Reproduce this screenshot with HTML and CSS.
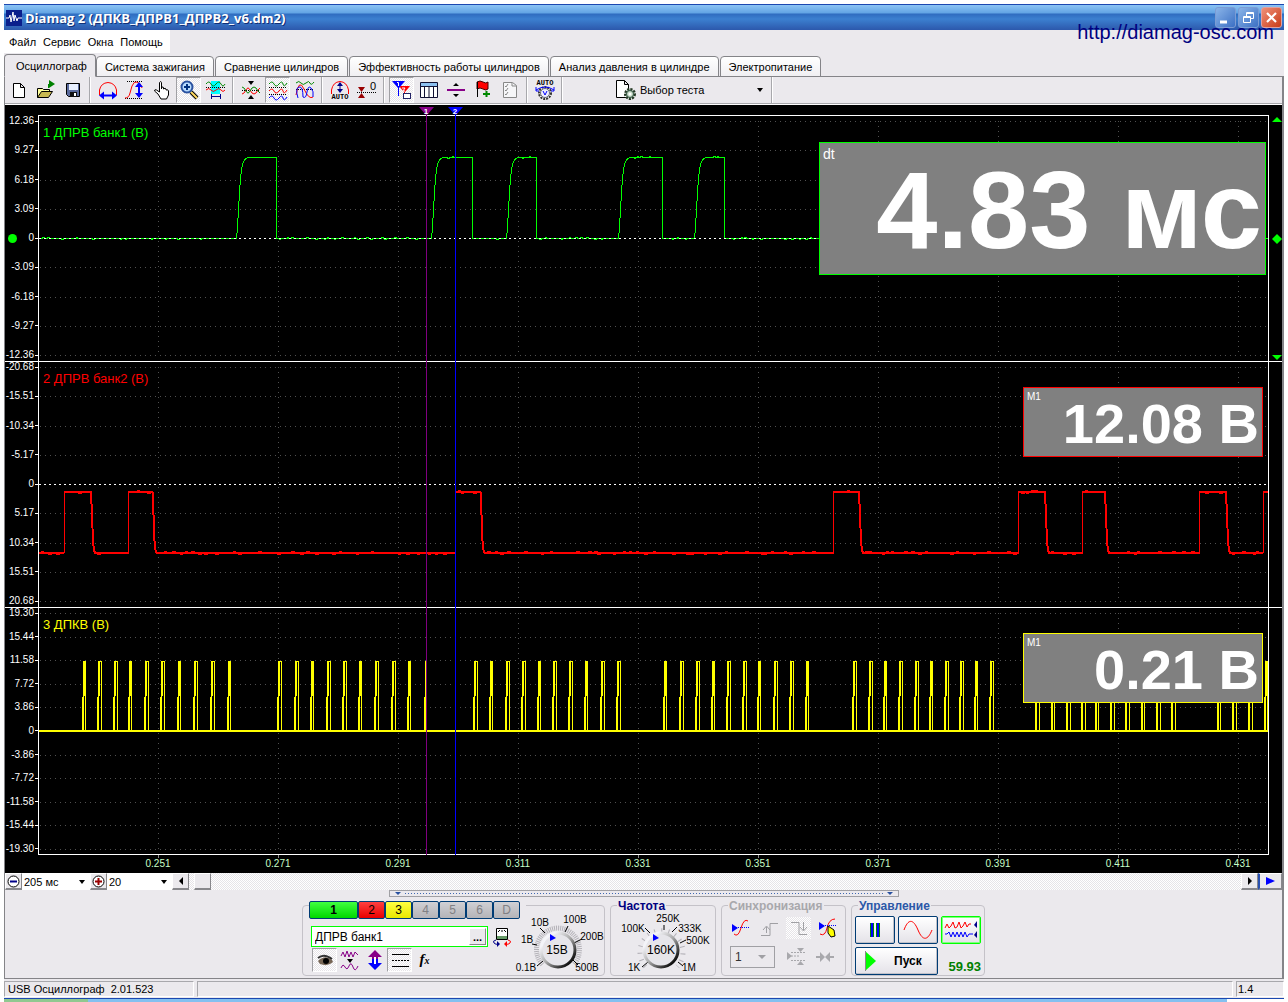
FILE: index.html
```html
<!DOCTYPE html>
<html lang="ru">
<head>
<meta charset="utf-8">
<title>Diamag 2</title>
<link rel="stylesheet" href="styles.css">
</head>
<body>
<div class="window">
  <header class="titlebar">
    <svg class="app-icon" width="16" height="16" viewBox="0 0 16 16"><rect width="16" height="16" fill="#0a1f8c"/><path d="M0 8h3l1-3 1 7 2-10 1 9 1-6 2 6 1-3h4" fill="none" stroke="#fff"/></svg>
    <h1>Diamag 2 (ДПКВ_ДПРВ1_ДПРВ2_v6.dm2)</h1>
    <button class="win-btn" aria-label="Свернуть"><svg width="19" height="19"><path d="M4 14h7" stroke="#fff" stroke-width="3"/></svg></button>
    <button class="win-btn" aria-label="Восстановить"><svg width="19" height="19" fill="none" stroke="#fff"><path d="M4.500 8.500h7v6h-7zM4 9.500h8M7.500 8V4.500h7v6h-3M7 5.500h8"/></svg></button>
    <button class="win-btn close" aria-label="Закрыть"><svg width="19" height="19"><path d="M5 5l9 9M14 5l-9 9" stroke="#fff" stroke-width="2.200"/></svg></button>
    <a class="site" href="http://diamag-osc.com">http://diamag-osc.com</a>
  </header>

  <nav class="menu">
    <button>Файл</button><button>Сервис</button><button>Окна</button><button>Помощь</button>
  </nav>

  <div class="tabs" role="tablist">
    <button class="tab active" role="tab">Осциллограф</button>
    <button class="tab" role="tab">Система зажигания</button>
    <button class="tab" role="tab">Сравнение цилиндров</button>
    <button class="tab" role="tab">Эффективность работы цилиндров</button>
    <button class="tab" role="tab">Анализ давления в цилиндре</button>
    <button class="tab" role="tab">Электропитание</button>
  </div>

  <main class="page">
    <div class="toolbar">
      <button class="tool" aria-label="Новый"><svg viewBox="0 0 20 20"><path d="M4.500 3.500h7l4 4v10h-11zM11.500 3.500v4h4" fill="#fff" stroke="#000"/></svg></button>
      <button class="tool" aria-label="Открыть"><svg viewBox="0 0 20 20"><path d="M1.500 17.500v-9h5l1 1h6v3" fill="#ffff9c" stroke="#000"/><path d="M1.500 17.500l4-6h11l-4 6z" fill="#c8b850" stroke="#000"/><path d="M12.500 8V4" stroke="#080"/><path d="M13 0l6 4-6 4z" fill="#008000"/></svg></button>
      <button class="tool" aria-label="Сохранить"><svg viewBox="0 0 20 20"><path d="M3.500 3.500h13v13h-11l-2-2z" fill="#5a6a9c" stroke="#000"/><path d="M6 4h9v6H6z" fill="#e8f0ff"/><path d="M7 12h7v5H7z" fill="#111"/><path d="M11 13h2v3h-2z" fill="#fff"/></svg></button>
      <span class="sep"></span>
      <button class="tool" aria-label="Период"><svg viewBox="0 0 20 20" fill="none"><path d="M1.500 15V10Q3 3 10 2.500 17 3 18.500 10v5" stroke="red"/><path d="M3 15.500h14" stroke="#00f" stroke-width="2"/><path d="M1 15.500l5-4v8zM19 15.500l-5-4v8z" fill="#00f"/></svg></button>
      <button class="tool" aria-label="Амплитуда"><svg viewBox="0 0 20 20" fill="none"><path d="M2 1.500h16M0 18.500h17" stroke="#000" stroke-dasharray="1 1"/><path d="M0 18q4 0 5-5l2-7q2-5 5-4 4 1 5 6" stroke="red"/><path d="M14 5v10" stroke="#00f" stroke-width="2"/><path d="M14 2l-4 5h8zM14 18l-4-5h8z" fill="#00f"/></svg></button>
      <button class="tool" aria-label="Рука"><svg viewBox="0 0 20 20"><path d="M7.500 12V2.500q1.500-2 2 0V9V7.500q2-1.500 2 .5v1q2-1.500 2.500 0v1q2-1 2.500 1v4l-2 4H9l-3-5-3.500-3q0-2 2-1z" fill="#fff" stroke="#000"/></svg></button>
      <button class="tool on" aria-label="Лупа"><svg viewBox="0 0 20 20"><path d="M12 12l6 6" stroke="#000" stroke-width="4"/><path d="M12 12l6 6" stroke="#ffd860" stroke-width="2"/><circle cx="8" cy="7" r="5.500" fill="#b8dcff" stroke="#2a52a0" stroke-width="2"/><path d="M5 7h6M8 4v6" stroke="#003080" stroke-width="2"/></svg></button>
      <button class="tool" aria-label="Участок"><svg viewBox="0 0 20 20" fill="none"><path d="M5 1h9v13H5z" fill="#0ff"/><path d="M0 4q3-4 5 0t5 0 5 0 4 0" stroke="#080"/><path d="M0 7.500h19" stroke="#000" stroke-dasharray="1 1"/><path d="M0 10q3-3 5 0t5 0 5 0 4 0" stroke="red"/><path d="M5.500 14v5M14.500 14v5M6 16.500h8" stroke="#008"/></svg></button>
      <span class="sep"></span>
      <button class="tool" aria-label="Центр"><svg viewBox="0 0 20 20" fill="none"><path d="M7 1h6l-3 4zM7 19h6l-3-4z" fill="#000"/><path d="M1 10.500h18" stroke="#000" stroke-dasharray="1 1"/><path d="M1 14q2 0 4-4t4 0 4 4 4-4l2-2" stroke="red"/><path d="M1 7q2 0 4 4t4 0 4-4 4 4l2 2" stroke="#080"/></svg></button>
      <button class="tool on" aria-label="Раздельно"><svg viewBox="0 0 20 20" fill="none"><path d="M1 4q3-4 5 0t5 0 4 0 4-1" stroke="#080"/><path d="M1 7.500h18M1 14.500h18" stroke="#000" stroke-dasharray="1 1"/><path d="M1 11q3-4 5 0t5 0 4 0 4-1" stroke="red"/><path d="M1 18q3-4 5 0t5 0 4 0 4-1" stroke="#00f"/></svg></button>
      <button class="tool" aria-label="Совместно"><svg viewBox="0 0 20 20" fill="none"><path d="M1 3q3-3 5 0t5 0 4 0 4-1" stroke="#080"/><path d="M1 9.500h18" stroke="#000" stroke-dasharray="1 1"/><path d="M1 15Q4-2 9 9t9 8" stroke="red"/><path d="M3 18Q0 8 4 7t4 10q3 2 4-5t4-4 2 9" stroke="#00f"/></svg></button>
      <span class="sep"></span>
      <button class="tool" aria-label="Авто"><svg viewBox="0 0 20 20" fill="none"><path d="M1.500 14V10Q3 2 10 1.500 17 2 18.500 10v4" stroke="red"/><path d="M10 3v8" stroke="#008"/><path d="M10 2l-3 4h6zM10 13l-3-4h6z" fill="#008"/><text x="10" y="19" class="micro">AUTO</text></svg></button>
      <button class="tool" aria-label="Ноль"><svg viewBox="0 0 20 20"><path d="M1 7h7l-3.500 5zM1 18h7l-3.500-5z" fill="#900"/><path d="M0 12.500h19" stroke="#000" stroke-dasharray="1 1"/><text x="16" y="10" class="zero">0</text></svg></button>
      <span class="sep"></span>
      <button class="tool on" aria-label="Маркеры"><svg viewBox="0 0 20 20"><path d="M7 6h11l-5 6v7h-1v-7z" fill="red"/><path d="M0 1h13L7 8v8H6V8z" fill="#00f"/><path d="M5 2.500h1.500V6M10 8h3l-2 3h2" stroke="#fff" fill="none"/><rect x="11.500" y="13.500" width="7" height="5" fill="#fff" stroke="#226"/></svg></button>
      <button class="tool" aria-label="Таблица"><svg viewBox="0 0 20 20"><path d="M1.500 2.500h17v15h-17z" fill="#fff" stroke="#113"/><path d="M2 3h16v3H2z" fill="#8cc0f0"/><path d="M1 6.500h18M5.500 6v11M10 6v11M14.500 6v11" stroke="#113"/></svg></button>
      <button class="tool" aria-label="Разделить"><svg viewBox="0 0 20 20"><path d="M10 3l3 3H7zM10 17l3-3H7z"/><path d="M1 10h18" stroke="#808" stroke-width="2"/></svg></button>
      <button class="tool" aria-label="Флаг"><svg viewBox="0 0 20 20"><path d="M4 2q3-2 6 0t5 0v7q-2 2-5 0t-6 0z" fill="red" stroke="#400"/><path d="M4.500 2v15" stroke="#000"/><path d="M13.500 11v6M10 14h7" stroke="#080" stroke-width="2"/></svg></button>
      <button class="tool" aria-label="Список"><svg viewBox="0 0 20 20" fill="none" stroke="#888"><path d="M3.500 2.500h9l4 3v12h-13z" fill="#f6f6f8"/><path d="M5 6l1 1 2-3M5 10l1 1 2-3M5 14l1 1 2-3M12 3v3h4"/></svg></button>
      <span class="sep"></span>
      <button class="tool" aria-label="Автонастройка"><svg viewBox="0 0 20 24"><text x="10" y="7" class="micro">AUTO</text><circle cx="10" cy="15" r="6" fill="#fff" stroke="#333" stroke-dasharray="2 1" stroke-width="2"/><circle cx="10" cy="15" r="4.500" fill="#eef" stroke="#667"/><path d="M8 13l2 4 2-4" stroke="#00f" fill="none"/><path d="M1 12q9-6 18 0M1 9v4h3M19 9v4h-3" stroke="#00f" fill="none"/></svg></button>
      <span class="sep"></span>
      <button class="test-pick">
        <svg width="22" height="20" viewBox="0 0 22 20"><path d="M1.500.5h8l4 4v13h-12zM9.500.5v4h4" fill="#fff" stroke="#000"/><circle cx="15" cy="14" r="4.500" fill="#b8ccb8" stroke="#243824" stroke-width="3" stroke-dasharray="2 1"/><circle cx="15" cy="14" r="3.500" fill="#c8dcc8" stroke="#354"/><circle cx="15" cy="14" r="1.500" fill="#fff"/></svg>
        <span>Выбор теста</span><i class="caret"></i>
      </button>
      <span class="sep"></span>
    </div>

    <section class="scope">
      <div class="channel ch1">
        <ol class="axis"><li>12.36</li><li>9.27</li><li>6.18</li><li>3.09</li><li>0</li><li>-3.09</li><li>-6.18</li><li>-9.27</li><li>-12.36</li></ol>
        <div class="plot"><svg id="plot1" viewBox="39 115 1229 246" preserveAspectRatio="none"></svg><h2>1 ДПРВ банк1 (В)</h2></div>
        <div class="marks"><svg width="10" height="7"><path d="M5 1l5 5H0z"/></svg><svg width="10" height="10"><path d="M5 0l5 5-5 5-5-5z"/></svg><svg width="10" height="7"><path d="M5 6L0 1h10z"/></svg></div>
      </div>
      <div class="channel ch2">
        <ol class="axis"><li>-20.68</li><li>-15.51</li><li>-10.34</li><li>-5.17</li><li>0</li><li>5.17</li><li>10.34</li><li>15.51</li><li>20.68</li></ol>
        <div class="plot"><svg id="plot2" viewBox="39 361 1229 246" preserveAspectRatio="none"></svg><h2>2 ДПРВ банк2 (В)</h2></div>
      </div>
      <div class="channel ch3">
        <ol class="axis"><li>19.30</li><li>15.44</li><li>11.58</li><li>7.72</li><li>3.86</li><li>0</li><li>-3.86</li><li>-7.72</li><li>-11.58</li><li>-15.44</li><li>-19.30</li></ol>
        <div class="plot"><svg id="plot3" viewBox="39 607 1229 248" preserveAspectRatio="none"></svg><h2>3 ДПКВ (В)</h2></div>
      </div>
      <ol class="time"><li>0.251</li><li>0.271</li><li>0.291</li><li>0.311</li><li>0.331</li><li>0.351</li><li>0.371</li><li>0.391</li><li>0.411</li><li>0.431</li></ol>
      <svg class="flags" viewBox="39 106 1229 10" preserveAspectRatio="none"><path d="M419 107h15l-7 8h-1z" fill="#808"/><path d="M448 107h15l-7 8h-1z" fill="#00f"/><text x="426" y="114">1</text><text x="455" y="114">2</text></svg>
      <div class="readout big r1"><span>dt</span><strong>4.83 мс</strong></div>
      <div class="readout r2"><span>M1</span><strong>12.08 В</strong></div>
      <div class="readout r3"><span>M1</span><strong>0.21 В</strong></div>
    </section>

    <div class="scrollrow">
      <button class="sbtn" aria-label="Уменьшить"><svg width="13" height="13" fill="none"><circle cx="6.500" cy="6.500" r="5.500" stroke="#000" fill="#fff"/><path d="M3 6.500h7" stroke="#008" stroke-width="2"/></svg></button>
      <span class="combo w1"><select aria-label="Длительность"><option>205 мс</option></select><i class="caret"></i></span>
      <button class="sbtn" aria-label="Увеличить"><svg width="13" height="13" fill="none"><circle cx="6.500" cy="6.500" r="5.500" stroke="#000" fill="#fff"/><path d="M3 6.500h7M6.500 3v7" stroke="#900" stroke-width="2"/></svg></button>
      <span class="combo w2"><select aria-label="Масштаб"><option>20</option></select><i class="caret"></i></span>
      <button class="sbtn" aria-label="Влево"><svg width="6" height="8"><path d="M5 0v8L1 4z"/></svg></button>
      <input class="track" type="range" min="0" max="1035" value="5" aria-label="Прокрутка">
      <button class="sbtn" aria-label="Вправо"><svg width="6" height="8"><path d="M1 0v8l4-4z"/></svg></button>
      <button class="sbtn play" aria-label="Воспроизвести"><svg width="9" height="8"><path d="M0 0v8l9-4z" fill="#00f"/></svg></button>
    </div>
    <div class="splitter"><i></i><b></b><i></i></div>

    <div class="panels">
      <section class="group g-channels">
        <div class="chan-tabs"><button class="c1">1</button><button class="c2">2</button><button class="c3">3</button><button disabled>4</button><button disabled>5</button><button disabled>6</button><button disabled>D</button></div>
        <div class="chan-body">
          <div class="chan-left">
            <div class="chan-name"><span class="field"><input type="text" value="ДПРВ банк1" aria-label="Имя канала"><button class="dots" aria-label="Выбрать">...</button></span>
              <button class="flat" aria-label="Щуп"><svg width="20" height="20" fill="none"><path d="M4.500 1.500h11v11h-11z" fill="#fff" stroke="#000"/><path d="M5 9h10v3H5z" fill="#696"/><path d="M6 5l2-2M10 3v2M14 5l-2-2" stroke="#000"/><path d="M4 13q-4 1-2 3t4 1" stroke="#008"/><path d="M16 13q4 1 2 3t-4 1" stroke="red"/><path d="M5 14l3 3-3 3z" fill="#008"/><path d="M15 14l-3 3 3 3z" fill="red"/></svg></button></div>
            <div class="chan-tools">
              <button class="tool on" aria-label="Видимость"><svg viewBox="0 0 20 20"><path d="M3 11q7-7 14-1l1 2q-5 5-13 2z" fill="#765"/><path d="M3 8q6-5 14 1" stroke="#333" fill="none" stroke-width="2"/><circle cx="11" cy="11" r="3"/></svg></button>
              <button class="tool" aria-label="Фильтр"><svg viewBox="0 0 20 20" fill="none" stroke="#808"><path d="M1 6l2-4 2 5 2-6 2 6 2-5 2 5 2-5 3 3M1 18q2-5 4-1t4-1 4 1 5-1"/><path d="M7 9h6l-3 4z" fill="#000" stroke="none"/></svg></button>
              <button class="tool" aria-label="Инверсия"><svg viewBox="0 0 20 20"><path d="M10 0l7 7h-4v4H7V7H3z" fill="#808"/><path d="M10 20l7-7h-4v-4H7v4H3z" fill="#00f"/><path d="M9 7h2v7H9z" fill="#fff"/></svg></button>
              <button class="tool on" aria-label="Уровни"><svg viewBox="0 0 20 20"><path d="M2 4.500h17M2 16.500h17" stroke="#000"/><path d="M2 10.500h17" stroke="#000" stroke-dasharray="2 1"/></svg></button>
              <button class="tool fx" aria-label="Функция">f<small>x</small></button>
            </div>
          </div>
          <svg class="knob" width="92" height="66" viewBox="512 912 92 66" role="img" aria-label="Диапазон">
            <path class="ring" d="M542.500 965.500A21.500 21.500 0 1 1 573.500 965.500"/>
            <path class="ticks" d="M545 934l-5-5M565 933l3-6M574 944l8-4M573 961l5 5M543 962l-6 5M537 946l-5-1"/>
            <use href="#dial" x="558" y="951"/>
            <text x="557" y="955" class="val">15В</text>
            <text x="540" y="927">10В</text><text x="575" y="924">100В</text><text x="592" y="941">200В</text><text x="587" y="972">500В</text><text x="526" y="972">0.1В</text><text x="527" y="944">1В</text>
          </svg>
        </div>
      </section>

      <section class="group g-freq">
        <h3>Частота</h3>
        <svg class="knob" width="100" height="66" viewBox="611 912 100 66" role="img" aria-label="Частота">
          <defs>
            <linearGradient id="rim" x1="0" y1="0" x2="1" y2="1"><stop offset="0.200" stop-color="#f4f4f8"/><stop offset="0.500" stop-color="#aaa"/><stop offset="0.900" stop-color="#000"/></linearGradient>
            <g id="dial"><circle r="17" fill="#e6e5ea" stroke="url(#rim)" stroke-width="3"/><path d="M-8-16l6 4-6 3z" fill="#00f"/></g>
          </defs>
          <path class="sparse" d="M645.500 967.500A21.500 21.500 0 1 1 677.500 967.500"/>
          <path class="ticks" d="M664 931v-5M650 934l-5-5M672 933l5-5M680 944l6-3M678 963l5 4M648 963l-6 5"/>
          <use href="#dial" x="661" y="951"/>
          <text x="661" y="955" class="val">160K</text>
          <text x="668" y="923">250K</text><text x="633" y="933">100K</text><text x="690" y="933">333K</text><text x="698" y="945">500K</text><text x="634" y="972">1K</text><text x="689" y="972">1M</text>
        </svg>
      </section>

      <section class="group g-sync">
        <h3>Синхронизация</h3>
        <div class="row">
          <button class="tool" aria-label="Уровень"><svg viewBox="0 0 20 20" fill="none"><path d="M3 16q4 4 7-6t7-7" stroke="red"/><path d="M1 9.500h18" stroke="#00f" stroke-dasharray="1 1"/><path d="M1 6l6 4-6 4z" fill="#00f"/></svg></button>
          <button class="tool" aria-label="Фронт" disabled><svg viewBox="0 0 20 20" fill="none" stroke="#a0a0a4"><path d="M1 17.500h9V5.500h8"/><path d="M6.500 15V9M3 12l3.500-4 3.500 4"/></svg></button>
          <button class="tool on dim" aria-label="Спад" disabled><svg viewBox="0 0 20 20" fill="none" stroke="#a0a0a4"><path d="M2 4.500h8v12h8M14.500 4v8M11 9l3.500 4L18 9"/></svg></button>
          <button class="tool" aria-label="Захват"><svg viewBox="0 0 20 20" fill="none"><path d="M2 16q5 3 7-6t8-9" stroke="red"/><path d="M1 7.500h18" stroke="#00f" stroke-dasharray="1 1"/><path d="M1 4l6 4-6 4z" fill="#00f"/><path d="M10 8l6 4 1 6-4 1-3-4z" fill="#ff0" stroke="#000"/></svg></button>
        </div>
        <div class="row second">
          <span class="combo sync"><select aria-label="Канал синхронизации" disabled><option>1</option></select><i class="caret"></i></span>
          <button class="tool" aria-label="Окно" disabled><svg viewBox="0 0 20 20" fill="#a8a8ac"><path d="M1 5l5 4-5 4zM11 1h7l-3.500 4zM11 18h7l-3.500-4z"/><path d="M5 5.500h14M5 9h9M5 13.500h14" stroke="#a8a8ac" stroke-dasharray="2 1"/></svg></button>
          <button class="tool" aria-label="Сжать" disabled><svg viewBox="0 0 20 20" fill="#a8a8ac"><path d="M1 9h4V5l5 5-5 5v-4H1zM19 9h-4V5l-5 5 5 5v-4h4z"/></svg></button>
        </div>
      </section>

      <section class="group g-ctl">
        <h3>Управление</h3>
        <div class="ctl">
          <button class="xp" aria-label="Пауза"><svg width="12" height="14"><path d="M1 0h4v14H1zM7 0h4v14H7z" fill="#080"/><path d="M2 0h2v14H2zM8 0h2v14H8z" fill="#00f"/></svg></button>
          <button class="xp" aria-label="Синус"><svg width="30" height="20" fill="none"><path d="M1 10C5-1 10-2 15 10s10 10 14 0" stroke="red"/></svg></button>
          <button class="xp sel" aria-label="Поток"><svg width="34" height="20" fill="none"><path d="M1 8l2-4 2 4 2-2 2-4 2 6 2-1 2-5 2 6 2-2 2-4 2 5 2-3 2 0" stroke="red"/><path d="M1 14l2 0 2-2 2 5 2-5 2 5 2-5 2 5 2-5 2 5 2-5 2 5 2-3 4 0" stroke="#00f"/><path d="M33 1v7l-3-3zM33 11v7l-3-3z" fill="#008"/></svg></button>
          <button class="xp run"><svg width="11" height="20"><path d="M0 0l11 10L0 20z" fill="#0f0"/><path d="M.5 0v20" stroke="#888"/></svg><span>Пуск</span></button>
          <output class="fps">59.93</output>
        </div>
      </section>
    </div>
  </main>

  <footer class="status"><span class="s1">USB Осциллограф&nbsp; 2.01.523</span><span class="s2"></span><span class="s3">1.4</span></footer>
  <div class="taskbar"></div>
</div>
<script src="scope.js"></script>
</body>
</html>
```
FILE: styles.css
```css
* { box-sizing: border-box; }
:root {
  --face: #ebe9ed;
  --line: #848488;
  --check: repeating-conic-gradient(#ffffff 0 25%, #e6e4e8 0 50%) 0 0 / 2px 2px;
}
body {
  margin: 0;
  padding: 4px 4px 0;
  background: #fff;
  color: #000;
  font: 11px/14px "Liberation Sans", Arial, sans-serif;
}
button, input, select { font: inherit; color: inherit; margin: 0; padding: 0; border: 0; background: none; }
h1, h2, h3, ol { margin: 0; padding: 0; font: inherit; }
ol { list-style: none; }
svg { display: block; flex: none; }
.window { display: flex; flex-direction: column; background: var(--face); }

/* title bar */
.titlebar {
  position: relative;
  display: flex;
  align-items: center;
  gap: 2px;
  height: 26px;
  padding: 0 2px;
  border-top: 1px solid #1c48b0;
  background: linear-gradient(#8cc4f4 0, #62a4e4 8px, #2f6cc0 9px, #3c80d0 14px, #2c58ac 25px);
}
.titlebar h1 { flex: 1; padding-left: 1px; color: #fff; font: bold 13px/18px "Open Sans", sans-serif; text-shadow: 1px 1px #123078; white-space: nowrap; }
.win-btn { width: 21px; height: 21px; border: 1px solid #7c9cd4; border-radius: 3px; background: linear-gradient(135deg, #8ab4e8, #3c70c4); }
.win-btn.close { background: linear-gradient(135deg, #f09078, #c83c18); border-color: #e0a0a0; }
.site { position: absolute; right: 10px; top: 16px; color: #000080; font-size: 20px; line-height: 22px; text-decoration: none; }

/* menu and tabs */
.menu { display: flex; align-self: flex-start; gap: 7px; height: 23px; width: 166px; padding-left: 5px; background: #fff; }
.tabs { display: flex; align-items: flex-end; gap: 1px; height: 24px; border-bottom: 1px solid var(--line); }
.tab { flex: none; height: 21px; padding: 0 8px; margin-bottom: -1px; border: 1px solid var(--line); border-radius: 4px 4px 0 0; background: linear-gradient(#fff, #f0eff2); white-space: nowrap; }
.tab.active { height: 23px; padding: 0 8px 0 11px; margin-right: -1px; border-bottom-color: var(--face); background: var(--face); }
.page { border: 1px solid var(--line); border-width: 0 2px 1px 1px; }

/* toolbar */
.toolbar { display: flex; gap: 2px; height: 28px; padding: 0 0 1px 1px; border-bottom: 1px solid #fff; box-shadow: inset 0 -1px #a8a8ac; }
.tool { display: grid; place-items: center; flex: none; width: 25px; height: 26px; }
.tool svg { width: 20px; height: 20px; overflow: visible; }
.tool svg[viewBox="0 0 20 24"] { height: 24px; }
.on { border: 1px solid #a0a0a4; border-right-color: #fff; border-bottom-color: #fff; background: var(--check); }
.sep { flex: none; width: 6px; background: linear-gradient(90deg, transparent 2px, #a8a8ac 2px 3px, #fff 3px 4px, transparent 4px); }
.micro { fill: #000; font: bold 7px "Liberation Mono", monospace; text-anchor: middle; }
.zero { font-size: 11px; text-anchor: middle; }
.test-pick { display: flex; align-items: center; gap: 3px; width: 200px; padding: 0 4px 0 48px; }
.caret { width: 0; height: 0; margin-left: auto; border: 3px solid transparent; border-top: 4px solid #000; border-bottom: 0; }

/* oscilloscope */
.scope { position: relative; padding-top: 10px; background: #000; color: #fff; font-size: 10px; line-height: 12px; }
.channel { display: grid; grid-template-columns: 33px 1fr 13px; height: 246px; }
.ch2, .ch3 { box-shadow: inset 0 1px #fff; }
.ch3 { height: 248px; }
.axis { display: flex; flex-direction: column; justify-content: space-between; text-align: right; }
.axis li { display: flex; justify-content: flex-end; align-items: center; gap: 1px; height: 12px; }
.axis li::after { content: ""; width: 3px; height: 1px; background: #fff; }
.ch1 .axis li:nth-child(5)::before { content: ""; width: 9px; height: 9px; margin: 0 auto 0 3px; border-radius: 50%; background: #00ff00; }
.plot { position: relative; min-width: 0; border: solid #fff; border-width: 0 1px; }
.plot svg { width: 100%; height: 100%; }
.ch1 .plot { box-shadow: inset 0 1px #fff; }
.ch3 .plot { box-shadow: inset 0 -1px #fff; }
.plot h2 { position: absolute; left: 4px; top: 10px; font-size: 13px; line-height: 15px; }
.ch1 h2 { color: #00ff00; }
.ch2 h2 { color: #ff0000; }
.ch3 h2 { color: #ffff00; }
.plot path { fill: none; shape-rendering: crispEdges; vector-effect: non-scaling-stroke; }
.grid { stroke: #505050; stroke-dasharray: 1 4; }
.zero-line { stroke: #fff; stroke-dasharray: 2 3; }
.trace1 { stroke: #00ff00; }
.trace2 { stroke: #ff0000; stroke-width: 2px; }
.edge2 { stroke: #ff0000; }
.trace3 { stroke: #ffff00; }
.base3 { stroke: #ffff00; stroke-width: 2px; }
.cursor1 { stroke: #800080; }
.cursor2 { stroke: #0000ff; }
.marks { display: flex; flex-direction: column; justify-content: space-between; align-items: center; padding: 1px 0 0 2px; fill: #00ff00; }
.time { display: flex; justify-content: space-between; height: 18px; padding: 0 26px 0 135px; color: #c8ffc8; text-align: center; }
.time li { width: 36px; padding-top: 3px; background: linear-gradient(#888, #888) 18px 0 / 1px 3px no-repeat; }
.flags { position: absolute; left: 34px; top: 1px; width: calc(100% - 48px); height: 10px; }
.flags text { fill: #fff; font: bold 8px/8px "Liberation Sans", sans-serif; text-anchor: middle; }
.readout { position: absolute; right: 19px; width: 240px; height: 70px; padding: 2px 3px; border: 1px solid; background: #808080; }
.readout span { position: absolute; left: 3px; top: 3px; color: #fff; }
.readout strong { display: block; color: #fff; font-size: 56px; line-height: 68px; text-align: right; white-space: nowrap; }
.readout.big { right: 16px; width: 447px; height: 133px; }
.big span { font-size: 14px; line-height: 16px; }
.big strong { font-size: 110px; line-height: 130px; }
.r1 { top: 37px; border-color: #00ff00; }
.r2 { top: 282px; border-color: #ff0000; }
.r3 { top: 528px; border-color: #ffff00; }

/* scroll row */
.scrollrow { display: flex; height: 17px; background: #fff; }
.sbtn { display: grid; place-items: center; flex: none; width: 17px; height: 17px; border: 1px solid #fff; border-right-color: #88888c; border-bottom: 2px solid #88888c; background: var(--face); }
.play { width: 24px; border-left: 2px solid #2850b0; }
.combo { display: flex; align-items: center; position: relative; padding-right: 5px; background: #fff; }
.combo select { flex: 1; min-width: 0; appearance: none; padding-left: 2px; outline: 0; }
.w1 { width: 68px; }
.w2 { width: 65px; }
.track { flex: 1; min-width: 0; height: 17px; appearance: none; background: var(--check); }
.track::-webkit-slider-thumb { appearance: none; width: 17px; height: 17px; border: 1px solid #fff; border-right-color: #88888c; border-bottom: 2px solid #88888c; background: var(--face); }
.splitter { display: flex; align-items: center; gap: 4px; width: 510px; height: 7px; margin: 0 auto; padding: 0 5px; border: 1px solid #a0a0a4; }
.splitter i { border: 3px solid transparent; border-top-color: #2850a0; border-bottom: 0; }
.splitter b { flex: 1; height: 1px; background: repeating-linear-gradient(90deg, #4068b0 0 1px, transparent 1px 3px); }

/* control panels */
.panels { display: flex; justify-content: center; gap: 5px; height: 81px; padding: 8px 0 2px; }
.group { position: relative; height: 71px; border: 1px solid #c4c2c8; border-radius: 4px; }
.group h3 { position: absolute; left: 6px; top: -7px; padding: 0 1px; background: var(--face); color: #000080; font-weight: bold; font-size: 12px; line-height: 14px; }
.g-channels { width: 303px; }
.g-freq { width: 106px; }
.g-sync { width: 125px; }
.g-ctl { width: 134px; }
.g-sync h3 { color: #a8a8ac; }
.g-ctl h3 { color: #2c58a8; }
.chan-tabs { position: absolute; left: 6px; top: -5px; display: flex; padding-right: 6px; background: var(--face); }
.chan-tabs button { width: 27px; height: 18px; border: 1px solid #003c74; border-radius: 2px; background: linear-gradient(#d0d0d4, #b4b4b8); font-size: 12px; }
.chan-tabs button:disabled { color: #808084; }
.chan-tabs .c1 { width: 49px; background: linear-gradient(#40ff40, #00d800); font-weight: bold; }
.chan-tabs .c2 { background: linear-gradient(#ff4040, #e80000); }
.chan-tabs .c3 { background: linear-gradient(#ffff40, #e8e800); }
.chan-body { display: flex; }
.chan-left { display: flex; flex-direction: column; gap: 1px; padding: 20px 0 0 8px; }
.chan-name { display: flex; gap: 4px; }
.field { display: flex; width: 177px; height: 21px; border: 1px solid #00ff00; background: #fff; }
.field input { flex: 1; min-width: 0; padding-left: 3px; font-size: 12px; }
.dots { width: 17px; height: 17px; margin: 1px; border: 1px solid #fff; border-right-color: #88888c; border-bottom-color: #88888c; background: var(--face); font-weight: bold; line-height: 8px; }
.chan-tools { display: flex; padding-left: 1px; }
.chan-tools .tool { height: 24px; }
.chan-tools .fx { display: block; font: italic bold 15px/18px "Liberation Serif", serif; }
.fx small { font-size: 10px; }
.knob { margin-top: 5px; overflow: visible; }
.knob text { font-size: 10px; text-anchor: middle; }
.knob .val { font-size: 12px; }
.ring, .sparse { fill: none; stroke: #b4b2b8; stroke-width: 5; stroke-dasharray: 1 1; }
.sparse { stroke-dasharray: 1 6; }
.ticks { fill: none; stroke: #000; }
.row { display: flex; gap: 4px; padding: 11px 6px 0; }
.row.second { padding: 7px 8px 0; }
.row .tool { height: 22px; }
.dim { border: 0; }
.sync { width: 48px; height: 22px; padding-right: 8px; margin-right: 4px; border: 1px solid #a0a0a4; background: var(--face); }
.sync select { padding-left: 4px; font-size: 12px; opacity: 1; color: #333; }
.sync .caret { border-width: 4px 4px 0; border-top-color: #a0a0a4; }
.ctl { display: grid; grid-template-columns: 40px 40px 40px; gap: 3px; padding: 10px 3px 0; }
.xp { display: flex; align-items: center; justify-content: center; height: 28px; border: 1px solid #003c74; border-radius: 2px; background: linear-gradient(#fff, #e4e2e8); box-shadow: inset -1px -1px #c0c0c8; }
.xp.sel { border-color: #00ff00; box-shadow: inset 0 0 0 1px #80ff80; }
.run { grid-column: span 2; justify-content: flex-start; gap: 18px; padding-left: 9px; font-weight: bold; font-size: 12px; }
.fps { align-self: end; padding-bottom: 1px; color: #008000; font-weight: bold; font-size: 13px; line-height: 14px; text-align: right; }

/* status bar */
.status { display: flex; gap: 3px; height: 19px; padding-top: 2px; }
.status span { height: 16px; padding-left: 3px; border: 1px solid #a8a8ac; border-right-color: #fff; border-bottom-color: #fff; line-height: 15px; white-space: nowrap; }
.s1 { width: 190px; }
.s2 { flex: 1; }
.status .s3 { width: 48px; padding-left: 1px; }
.taskbar { height: 4px; border-top: 1px solid #1c48b0; background: linear-gradient(90deg, #90c890 84px, #84c0f0 84px calc(100% - 57px), #fff 0); }
```
FILE: scope.js
```js
const NS = 'http://www.w3.org/2000/svg';

function draw(id, cls, d) {
  const p = document.createElementNS(NS, 'path');
  p.setAttribute('class', cls);
  p.setAttribute('d', d);
  document.getElementById(id).appendChild(p);
}

function grid(id, top, bottom, rows) {
  let d = '';
  const step = (bottom - top) / (rows - 1);
  for (let i = 0; i < rows; i++) d += `M40 ${Math.round(top + i * step) + 0.5}H1267`;
  for (let x = 158.5; x < 1268; x += 120) d += `M${x} ${top}V${bottom}`;
  draw(id, 'grid', d);
}

function cursors(id, top, bottom) {
  draw(id, 'cursor1', `M426.5 ${top}V${bottom}`);
  draw(id, 'cursor2', `M455.5 ${top}V${bottom}`);
}

let seed = 7;
function rnd() {
  seed = (seed * 16807) % 2147483647;
  return seed / 2147483647;
}

/* level line with short one-pixel steps */
function flat(from, to, y) {
  let d = `L${from} ${y}`;
  let x = from + 3;
  while (x < to - 4) {
    const r = rnd();
    const dy = r > 0.7 ? 1 : r < 0.25 ? -1 : 0;
    if (dy) d += `H${x}V${y + dy}H${x + 1 + Math.floor(rnd() * 2)}V${y}`;
    x += 3 + Math.floor(rnd() * 7);
  }
  return d + `H${to}`;
}

/* channel 1: camshaft sensor, bank 1 */
grid('plot1', 121, 355, 9);
let d1 = 'M39 238.5';
let x = 39;
for (const [up, down] of [[237.5, 276.5], [432.5, 472.5], [507.5, 536.5], [619.5, 662.5], [695.5, 724.5]]) {
  d1 += flat(x, up - 1, 238.5);
  for (const [dx, y] of [[0, 227], [1, 210], [2, 192], [3, 178], [4, 170], [5, 164], [7, 160], [10, 157.5]]) d1 += `L${up + dx} ${y}`;
  d1 += flat(up + 12, down, 157.5) + 'V238.5';
  x = down;
}
d1 += flat(x, 1268, 238.5);
draw('plot1', 'trace1', d1);
draw('plot1', 'zero-line', 'M39 238.5H1268');
cursors('plot1', 115, 361);

/* channel 2: camshaft sensor, bank 2 */
grid('plot2', 367, 601, 9);
draw('plot2', 'zero-line', 'M39 484.5H1268');
let d2 = 'M39 553';
let rises = '';
x = 39;
for (const [up, down] of [[64, 91], [128.5, 152.5], [456, 480.5], [833.5, 859], [1018.5, 1045], [1082.5, 1105], [1199.5, 1226]]) {
  d2 += flat(x, up, 553);
  if (up !== 456) rises += `M${Math.floor(up) + 0.5} 553V491`;
  d2 += `M${up} 492` + flat(up, down, 492) + `L${down + 1} 515L${down + 2} 541L${down + 3} 550L${down + 4} 553`;
  x = down + 4;
}
d2 += flat(x, 1263, 553) + 'M1263 492H1268';
draw('plot2', 'trace2', d2);
draw('plot2', 'edge2', rises + 'M1263.5 553V491');
cursors('plot2', 361, 607);

/* channel 3: crankshaft sensor, ten teeth to a group */
grid('plot3', 613, 849, 11);
draw('plot3', 'zero-line', 'M39 731.5H1268');
const teeth = [
  82, 97, 113, 128, 144, 160, 177, 193, 210, 227,
  277, 294, 310, 326, 342, 358, 374, 391, 407, 424,
  473, 489, 505, 521, 537, 552, 568, 584, 600, 616,
  663, 679, 695, 711, 726, 742, 757, 773, 789, 805,
  852, 868, 883, 898, 914, 929, 944, 959, 974, 989,
  1035, 1051, 1066, 1081, 1095, 1110, 1125, 1141, 1156, 1171,
  1217, 1232, 1248, 1264
];
let d3 = '';
teeth.forEach((t, i) => {
  const w = i === 19 ? 1 : 2 + (i % 3 ? 1 : 0);
  d3 += `M${t + 0.5} 731V697M${t + 1.5} 731V661.5H${t + 1.5 + w}V731`;
  d3 += `M${t + 2.5} 696V662`;
});
draw('plot3', 'trace3', d3);
draw('plot3', 'base3', 'M39 731H1268');
cursors('plot3', 607, 855);
```
